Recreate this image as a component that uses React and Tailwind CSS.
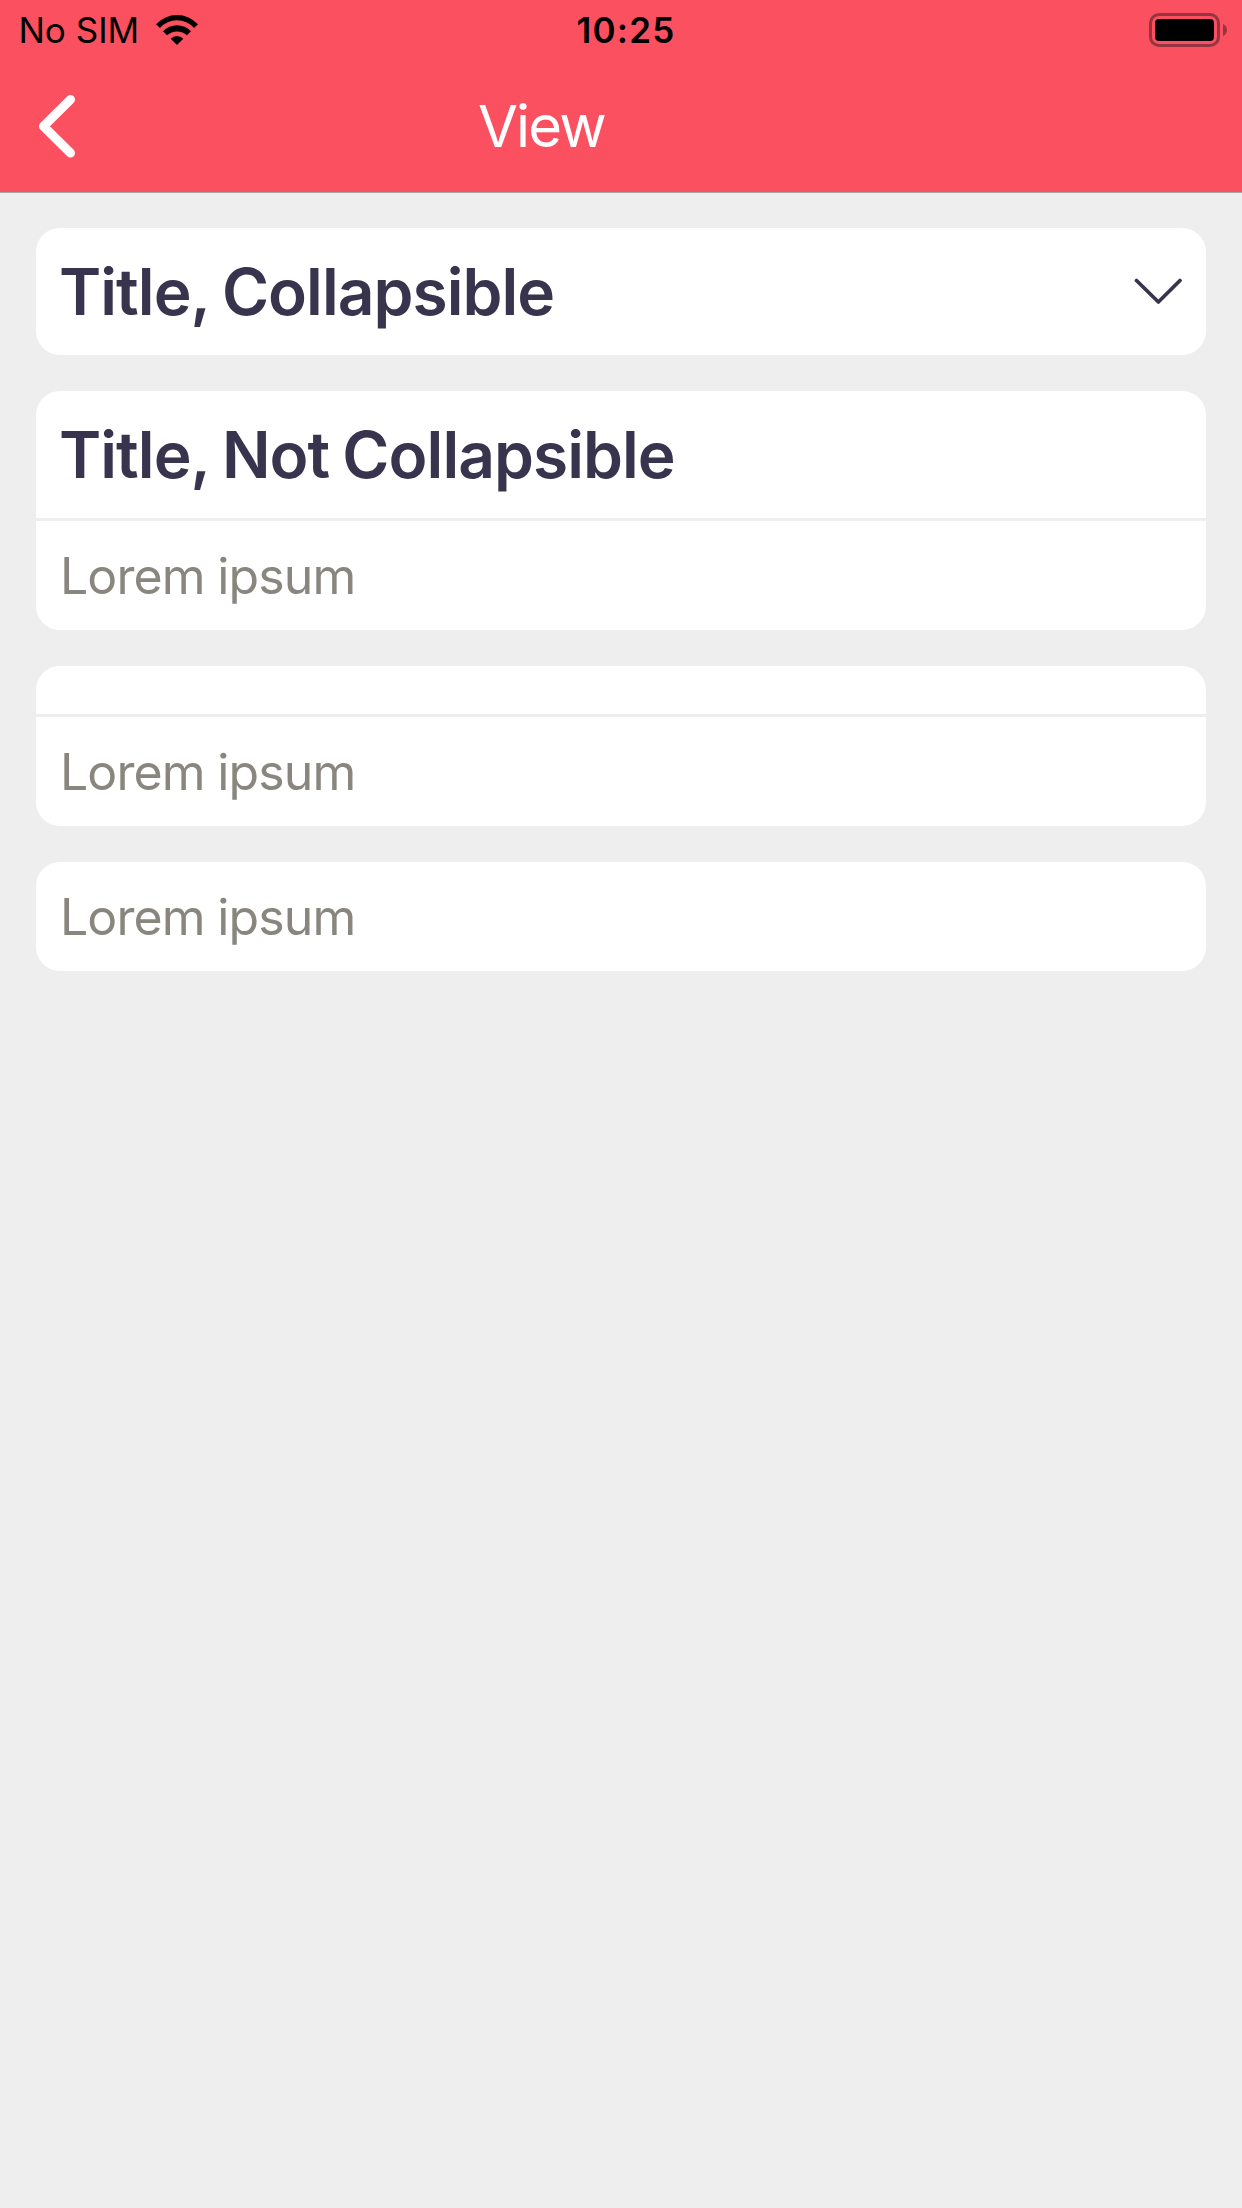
import { useState } from 'react';

function StatusBar() {
  return (
    <div className="grid h-[60px] grid-cols-3 items-center text-black">
      <div className="flex items-center pl-[18.5px]">
        <span className="text-[35px] leading-[60px]">No SIM</span>
        <svg className="ml-[17px] h-[30px] w-[42px]" viewBox="0 0 42 30" fill="currentColor">
          <path d="M0 9.3 A28.4 28.4 0 0 1 42 9.3 L38 13 A22.6 22.6 0 0 0 4 13 Z" />
          <path d="M7 16.3 A19.3 19.3 0 0 1 35 16.3 L31 20.3 A14.8 14.8 0 0 0 11 20.3 Z" />
          <path d="M14.7 23.7 A8.7 8.7 0 0 1 27.3 23.7 L21 30 Z" />
        </svg>
      </div>
      <div className="pl-[162.5px] text-[35px] font-semibold leading-[60px] tracking-[1.2px]">10:25</div>
      <div className="flex items-center justify-end pr-[15px]">
        <div className="h-[34px] w-[71px] rounded-[10px] border-[3px] border-[#96343f] p-[3px]">
          <div className="h-full rounded-[4px] bg-black" />
        </div>
        <svg className="ml-[3px] h-[12px] w-[4px]" viewBox="0 0 4 12" fill="#96343f">
          <path d="M0 0 C5.3 2 5.3 10 0 12 Z" />
        </svg>
      </div>
    </div>
  );
}

function NavBar({ title }) {
  return (
    <div className="flex h-[132px] items-center pl-[38px] text-white">
      <svg className="h-[64px] w-[38px]" viewBox="0 0 38 64" fill="none" stroke="currentColor">
        <path d="M32.5 5.5 L5.5 32.3 L32.5 59" strokeWidth="9" strokeLinecap="round" strokeLinejoin="round" />
      </svg>
      <h1 className="ml-[402px] text-[58px] font-normal leading-[70px] tracking-[-1.9px]">{title}</h1>
    </div>
  );
}

function Card({ title, collapsible, children }) {
  const [collapsed, setCollapsed] = useState(!!collapsible);

  return (
    <div className="overflow-hidden rounded-3xl bg-white">
      {title !== undefined && (
        <div
          onClick={() => collapsible && setCollapsed(!collapsed)}
          className="flex items-center justify-between py-6 pl-[23px] pr-6"
        >
          {title && (
            <h2 className="h-[79px] text-[64px] font-semibold leading-[79px] tracking-[-0.95px] [word-spacing:-2px] text-[#38344d]">
              {title}
            </h2>
          )}
          {collapsible && (
            <svg className="mb-[2px] h-[26px] w-[48px]" viewBox="0 0 48 26" fill="none" stroke="#38344d">
              <path d="M2.5 2.5 L24.4 24 L46 2.5" strokeWidth="3.7" strokeLinecap="round" strokeLinejoin="round" />
            </svg>
          )}
        </div>
      )}
      {!collapsed && (
        <div className={title !== undefined ? 'border-t-[3px] border-[#eeeeee]' : ''}>
          <p className="h-[109px] px-6 text-[50px] leading-[111px] tracking-[-0.9px] [word-spacing:-0.5px] text-[#89867f]">
            {children}
          </p>
        </div>
      )}
    </div>
  );
}

export default function App() {
  return (
    <div className="min-h-screen bg-[#eeeeee] font-['Inter',sans-serif]">
      <header className="border-b border-[#a7a7aa] bg-[#fb5060]">
        <StatusBar />
        <NavBar title="View" />
      </header>
      <main className="flex flex-col gap-9 px-9 pt-[35px]">
        <Card title="Title, Collapsible" collapsible>Lorem ipsum</Card>
        <Card title="Title, Not Collapsible">Lorem ipsum</Card>
        <Card title="">Lorem ipsum</Card>
        <Card>Lorem ipsum</Card>
      </main>
    </div>
  );
}
